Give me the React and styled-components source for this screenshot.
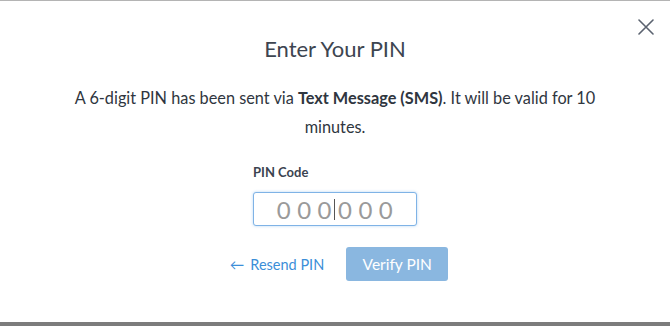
import React from "react";
import styled, { createGlobalStyle } from "styled-components";

const Global = createGlobalStyle`
  html, body { margin: 0; padding: 0; background: #fff; }
  body { font-family: "Lato", "Liberation Sans", sans-serif; }
`;

const Modal = styled.div`
  position: relative;
  box-sizing: border-box;
  width: 670px;
  height: 326px;
  border-top: 1px solid #b4b4b4;
  border-bottom: 4px solid #7c7c7c;
  display: flex;
  flex-direction: column;
  align-items: center;
  background: #fff;
`;

const Close = styled.button`
  position: absolute;
  top: 17px;
  right: 15px;
  width: 18px;
  height: 18px;
  padding: 0;
  border: 0;
  background: none;
  cursor: pointer;
  display: flex;
  align-items: center;
  justify-content: center;
`;

const Title = styled.h2`
  margin: 33px 0 0;
  font-size: 22px;
  line-height: 30px;
  font-weight: 400;
  color: #3d4550;
`;

const Message = styled.p`
  margin: 19px 0 0;
  width: 560px;
  text-align: center;
  font-size: 16.3px;
  line-height: 29px;
  color: #2f3640;
  b { font-weight: 700; }
`;

const Field = styled.div`
  margin-top: 23px;
  display: flex;
  flex-direction: column;
  width: 164px;
`;

const Label = styled.label`
  font-size: 13px;
  font-weight: 700;
  color: #3b4450;
  line-height: 16px;
  margin-bottom: 12px;
`;

const InputWrap = styled.div`
  position: relative;
`;

const PinInput = styled.input`
  box-sizing: border-box;
  width: 164px;
  height: 34px;
  border: 1px solid #7fb3e6;
  border-radius: 3px;
  box-shadow: 0 0 3px rgba(90, 160, 230, 0.45);
  outline: none;
  text-align: center;
  font-family: "Lato", "Liberation Sans", sans-serif;
  font-size: 24px;
  letter-spacing: 6.5px;
  padding: 0 0 0 6px;
  color: #333;
  caret-color: transparent;
  &::placeholder { color: #9a9a9a; }
`;

const Caret = styled.span`
  position: absolute;
  left: 81px;
  top: 7px;
  width: 1px;
  height: 21px;
  background: #555;
`;

const Actions = styled.div`
  margin-top: 21px;
  display: flex;
  align-items: center;
  gap: 22px;
  padding-left: 8px;
`;

const LinkButton = styled.a`
  display: flex;
  align-items: center;
  gap: 6px;
  font-size: 14.5px;
  color: #3b8ed8;
  text-decoration: none;
  cursor: pointer;
`;

const Primary = styled.button`
  width: 102px;
  height: 34px;
  border: 0;
  border-radius: 3px;
  background: #8ab7e0;
  color: #fff;
  font-family: "Lato", "Liberation Sans", sans-serif;
  font-size: 15.5px;
  cursor: not-allowed;
`;

export default function App() {
  return (
    <>
      <Global />
      <Modal>
        <Close aria-label="Close">
          <svg width="16" height="16" viewBox="0 0 16 16">
            <path d="M1 1L15 15M15 1L1 15" stroke="#5b6370" strokeWidth="1.6" strokeLinecap="round" />
          </svg>
        </Close>
        <Title>Enter Your PIN</Title>
        <Message>
          A 6-digit PIN has been sent via <b>Text Message (SMS)</b>. It will be valid for 10 minutes.
        </Message>
        <Field>
          <Label htmlFor="pin">PIN Code</Label>
          <InputWrap>
            <PinInput id="pin" placeholder="000000" />
            <Caret />
          </InputWrap>
        </Field>
        <Actions>
          <LinkButton>
            <span>←</span>
            <span>Resend PIN</span>
          </LinkButton>
          <Primary disabled>Verify PIN</Primary>
        </Actions>
      </Modal>
    </>
  );
}
